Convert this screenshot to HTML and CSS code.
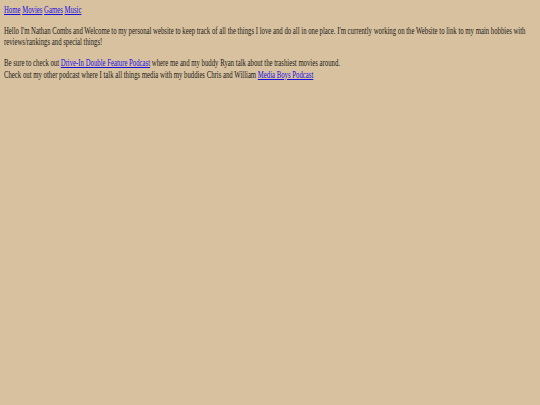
FILE: index.html
```html
<!DOCTYPE html>
<html>
<head>
<meta charset="utf-8">
<link rel="stylesheet" href="styles.css">
</head>
<body>
<div class="frame">
<div class="page">
<nav class="nav"><a href="#">Home</a> <a href="#">Movies</a> <a href="#">Games</a> <a href="#">Music</a></nav>
<p class="intro">Hello I'm Nathan Combs and Welcome to my personal website to keep track of all the things I love and do all in one place. I'm currently working on the Website to link to my main hobbies with reviews/rankings and special things!</p>
<p class="podcasts">Be sure to check out <a href="#">Drive-In Double Feature Podcast</a> where me and my buddy Ryan talk about the trashiest movies around.<br>Check out my other podcast where I talk all things media with my buddies Chris and William <a href="#">Media Boys Podcast</a></p>
</div>
</div>
</body>
</html>
```
FILE: styles.css
```css
html, body {
  background: #d8c19e;
}
body {
  margin: 5px 0 0 4px;
  font-family: "Liberation Serif", serif;
  font-size: 9.5px;
  line-height: 11.4px;
  color: #1a1a1a;
}
.frame {
  width: 534px;
  overflow: hidden;
}
.page {
  width: 746px;
  transform: scaleX(0.71);
  transform-origin: 0 0;
}
a { color: #1a10e0; }
.nav { margin: 0; }
p { margin: 9.6px 0; }
```
